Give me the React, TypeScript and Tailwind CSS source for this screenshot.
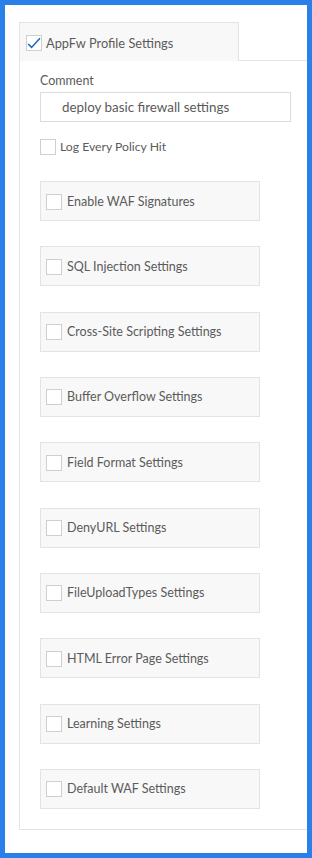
import React from "react";

const items = [
  "Enable WAF Signatures",
  "SQL Injection Settings",
  "Cross-Site Scripting Settings",
  "Buffer Overflow Settings",
  "Field Format Settings",
  "DenyURL Settings",
  "FileUploadTypes Settings",
  "HTML Error Page Settings",
  "Learning Settings",
  "Default WAF Settings",
];

function Box({ checked = false }: { checked?: boolean }) {
  return (
    <div className="w-[16px] h-[16px] shrink-0 border border-[#cfcfcf] bg-white relative">
      {checked && (
        <svg viewBox="0 0 16 16" className="absolute left-[-1px] top-[-1px] w-[16px] h-[16px]">
          <path d="M2.2 9 L5.6 12.4 L14 3.2" fill="none" stroke="#1b63b8" strokeWidth="1.5" />
        </svg>
      )}
    </div>
  );
}

export default function App() {
  return (
    <div
      className="w-[312px] h-[858px] bg-[#2a80e8] p-[5px] text-[12.5px] text-[#5b5b5b]"
      style={{ fontFamily: 'Lato, "Noto Sans", sans-serif' }}
    >
      <div className="w-full h-full bg-white pt-[17px] pl-[14px]">
        <div className="flex flex-col">
          <div className="flex h-[39px]">
            <div className="w-[220px] h-[39px] border-t border-l border-r border-[#e3e3e3] bg-[#f8f8f8] flex items-center pl-[6px] gap-[4px] pt-[1px]">
              <Box checked />
              <span className="leading-[18px] text-[12.8px]">AppFw Profile Settings</span>
            </div>
            <div className="flex-1 border-b border-[#e3e3e3]" />
          </div>
          <div className="border-l border-b border-[#e3e3e3] pl-[20px] pt-[10px] pb-[20px]">
            <div className="h-[20px] leading-[20px]">Comment</div>
            <div className="mt-[1px] w-[251px] h-[30px] border border-[#dcdcdc] flex items-center pl-[21px] text-[13.4px]">
              deploy basic firewall settings
            </div>
            <div className="mt-[17px] flex items-center gap-[4px] h-[16px]">
              <Box />
              <span className="text-[12.2px]">Log Every Policy Hit</span>
            </div>
            <div className="mt-[26px] flex flex-col gap-[25.33px]">
              {items.map((t) => (
                <div
                  key={t}
                  className="w-[220px] h-[40px] border border-[#e3e3e3] bg-[#f8f8f8] flex items-center pl-[5px] gap-[5px] pt-[1px]"
                >
                  <Box />
                  <span className="leading-[18px]">{t}</span>
                </div>
              ))}
            </div>
          </div>
        </div>
      </div>
    </div>
  );
}
